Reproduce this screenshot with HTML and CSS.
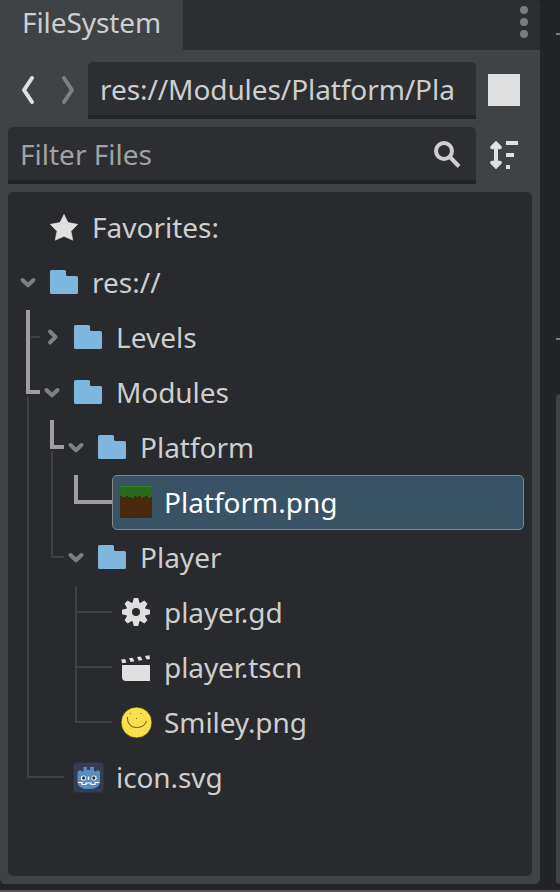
FILE: index.html
```html
<!DOCTYPE html>
<html lang="en">
<head>
<meta charset="utf-8">
<title>FileSystem</title>
<link rel="stylesheet" href="styles.css">
</head>
<body>
<svg class="defs" width="0" height="0" aria-hidden="true">
  <symbol id="folder" viewBox="0 0 32 32"><path d="M3.500 4H16.500Q18 4 18 5.500V8.500Q18 10 19.500 10H28.500Q30 10 30 11.500V26.500Q30 28 28.500 28H3.500Q2 28 2 26.500V5.500Q2 4 3.500 4Z" fill="#7fb6dd"/></symbol>
  <symbol id="down" viewBox="0 0 24 24"><path d="M6.500 10 12 15.300 17.500 10" fill="none" stroke="#7e7f81" stroke-width="4" stroke-linecap="round" stroke-linejoin="round"/></symbol>
  <symbol id="right" viewBox="0 0 24 24"><path d="M10 6.500 15.500 12 10 17.500" fill="none" stroke="#7e7f81" stroke-width="4" stroke-linecap="round" stroke-linejoin="round"/></symbol>
  <symbol id="teeth" viewBox="0 0 32 32"><path d="M13.800 2H18.200L19.800 8V24L18.200 30H13.800L12.200 24V8Z"/></symbol>
</svg>
<div class="editor">
  <section class="dock">
    <header class="tabs">
      <div class="tab">FileSystem</div>
      <svg class="dots" width="8" height="34" viewBox="0 0 8 34" fill="#7b7c7e"><circle cx="4" cy="5" r="4"/><circle cx="4" cy="17" r="4"/><circle cx="4" cy="29" r="4"/></svg>
    </header>
    <div class="bar path-bar">
      <svg class="nav" width="80" height="57" viewBox="0 0 80 57" fill="none" stroke-width="4" stroke-linecap="round" stroke-linejoin="round"><path d="M32 16 24 28 32 40" stroke="#e0e0e0"/><path d="M64 16 72 28 64 40" stroke="#7e8082"/></svg>
      <div class="field path">res://Modules/Platform/Pla</div>
      <div class="split"></div>
    </div>
    <div class="bar">
      <div class="field filter"><span>Filter Files</span>
        <svg width="32" height="32" viewBox="0 0 32 32" fill="none" stroke="#cfcfd0" stroke-width="4"><circle cx="14" cy="13" r="8"/><path d="M20 19 29 28.500"/></svg>
      </div>
      <svg class="sort" width="32" height="32" viewBox="0 0 32 32" fill="#e0e0e0"><path d="M8 7V25" stroke="#e0e0e0" stroke-width="4"/><path d="M8 2 13.500 7.500Q14 10 12 10H4Q2 10 2.500 7.500ZM8 30 13.500 24.500Q14 22 12 22H4Q2 22 2.500 24.500Z" stroke="#e0e0e0" stroke-width=".5"/><path d="M18 2H30V6H18ZM18 14H26V18H18ZM18 26H22V30H18Z"/></svg>
    </div>
    <div class="tree">
      <svg class="guides" width="524" height="684" viewBox="8 192 524 684" fill="none">
        <path d="M31 337H40M28 396V777H64M52 451V557H64M76 586V722H112M76 612H112M76 667H112" stroke="#404144" stroke-width="2"/>
        <path d="M28 310V392H40M52 420V447H64M76 475V502H112" stroke="#9f9fa1" stroke-width="4"/>
      </svg>
      <div class="row d0"><svg class="arrow"></svg><svg class="icon" viewBox="0 0 32 32"><path d="M16 3.500 20 11.500 29.700 13.300 23 20.200 24.800 29.200 16 25.300 7.200 29.200 9 20.200 2.300 13.300 12 11.500Z" fill="#e0e0e0" stroke="#e0e0e0" stroke-width=".6"/></svg><span>Favorites:</span></div>
      <div class="row d0"><svg class="arrow"><use href="#down"/></svg><svg class="icon"><use href="#folder"/></svg><span>res://</span></div>
      <div class="row d1"><svg class="arrow"><use href="#right"/></svg><svg class="icon"><use href="#folder"/></svg><span>Levels</span></div>
      <div class="row d1"><svg class="arrow"><use href="#down"/></svg><svg class="icon"><use href="#folder"/></svg><span class="tight">Modules</span></div>
      <div class="row d2"><svg class="arrow"><use href="#down"/></svg><svg class="icon"><use href="#folder"/></svg><span>Platform</span></div>
      <div class="row selected"><svg class="icon" viewBox="0 0 32 32"><path d="M0 0H32V32H0Z" fill="#49290e"/><path d="M0 0H32V11H30V12H28V10H25V11H23V12H21V10H18V11H16V10H14V12H11V11H8V10H6V11H2V10H0Z" fill="#29691c"/><path d="M0 0H32V1H0ZM4 4H5V5H4ZM10 7H11V8H10ZM18 3H19V4H18ZM28 4H29V5H28ZM24 8H25V9H24Z" fill="#328325"/><path d="M7 3H8V4H7ZM14 6H15V7H14ZM21 5H22V6H21ZM27 8H28V9H27Z" fill="#205315"/><path d="M4 17H5V18H4ZM12 15H13V16H12ZM19 20H20V21H19ZM27 16H28V17H27ZM8 26H9V27H8ZM24 28H25V29H24Z" fill="#5c351a"/></svg><span>Platform.png</span></div>
      <div class="row d2"><svg class="arrow"><use href="#down"/></svg><svg class="icon"><use href="#folder"/></svg><span>Player</span></div>
      <div class="row d4"><svg class="icon" viewBox="0 0 32 32" fill="#e0e0e0"><mask id="hub"><path d="M0 0H32V32H0Z" fill="#fff"/><circle cx="16" cy="16" r="4" fill="#000"/></mask><g mask="url(#hub)"><circle cx="16" cy="16" r="9.800"/><use href="#teeth"/><use href="#teeth" transform="rotate(45 16 16)"/><use href="#teeth" transform="rotate(90 16 16)"/><use href="#teeth" transform="rotate(135 16 16)"/></g></svg><span>player.gd</span></div>
      <div class="row d4"><svg class="icon" viewBox="0 0 32 32" fill="#e0e0e0"><path d="M2 14H30V30H6Q2 30 2 26Z"/><path d="M1.200 8.500 5 8 6.500 11.500 2.200 12.200ZM9 7.300 12.600 6.800 14.500 10.300 10.600 11ZM17 6.100 20.600 5.600 22.500 9.100 18.600 9.800ZM25 4.900 29.500 4.200 30 8 26.600 8.600Z"/></svg><span>player.tscn</span></div>
      <div class="row d4"><svg class="icon" viewBox="0 0 32 32"><circle cx="16.500" cy="16.500" r="15.500" fill="#f8df4b" stroke="#171711" stroke-width=".7"/><path d="M7.300 11Q7.500 21.500 16.500 21.500 24.500 21.500 26.500 15" fill="none" stroke="#534b18" stroke-width=".9"/><path d="M10 7.500H11M20.500 7.500H21.500M16 12.500H17" stroke="#706522"/></svg><span>Smiley.png</span></div>
      <div class="row leaf1"><svg class="icon" viewBox="0 0 32 32"><rect x="1.500" y="1.500" width="30" height="30" rx="3" fill="#363d52" stroke="#2c3143"/><path d="M5.500 11 8 9 10 10.500 11.500 10V6H15V9H18V6H22V10L24 10.500 26 9 28 11V22Q26 28 16.500 28 7 28 5.500 22V11Z" fill="#578dc1"/><circle cx="11.500" cy="17" r="2.600" fill="#fff"/><circle cx="22" cy="17" r="2.600" fill="#fff"/><circle cx="11.700" cy="17" r="1.700" fill="#34383d"/><circle cx="21.800" cy="17" r="1.700" fill="#34383d"/><path d="M16.500 15.500V19" stroke="#fff" stroke-width="1.300"/><path d="M6 21.500H10V23.500H14V22H19V23.500H23V21.500H27" fill="none" stroke="#fff" stroke-width="1.200"/></svg><span>icon.svg</span></div>
    </div>
  </section>
  <aside class="viewport">
    <div class="tick first"></div>
    <div class="tick second"></div>
    <div class="neighbor"></div>
  </aside>
</div>
<footer class="edge"></footer>
</body>
</html>
```
FILE: styles.css
```css
* { box-sizing: border-box; }
body {
  margin: 0;
  height: 892px;
  overflow: hidden;
  display: flex;
  flex-direction: column;
  background: #232428;
  color: #cdcecf;
  font: 28px/38px "Noto Sans", sans-serif;
}
svg { flex: none; display: block; }
.defs { position: absolute; }
.editor { display: flex; height: 884px; }
.dock {
  width: 540px;
  height: 884px;
  background: #404346;
  border-radius: 0 5px 5px 5px;
  overflow: hidden;
}
.tabs {
  height: 50px;
  background: #2d2e32;
  display: flex;
  justify-content: space-between;
  align-items: flex-start;
}
.tab {
  width: 183px;
  height: 50px;
  padding: 3px 0 0 22px;
  background: #404346;
  letter-spacing: -.08px;
}
.dots { margin: 5px 12px 0 0; }
.bar { display: flex; height: 57px; margin: 0 20px 8px 8px; }
.path-bar { margin-top: 12px; }
.nav { margin-left: -8px; margin-right: 8px; }
.field {
  height: 57px;
  background: #2d2e32;
  border-bottom: 4px solid #232428;
  border-radius: 5px 5px 0 0;
  white-space: nowrap;
}
.path { width: 388px; padding: 8px 12px 0; letter-spacing: -.08px; }
.split { width: 32px; height: 32px; margin: 12px 0 0 12px; background: #e0e0e0; }
.filter {
  width: 468px;
  padding: 8px 14px 0 12px;
  display: flex;
  justify-content: space-between;
  color: #a1a2a3;
}
.filter svg { margin-top: 3px; }
.sort { margin: 12px 0 0 12px; }
.tree {
  position: relative;
  height: 684px;
  margin: 0 8px;
  padding: 8px;
  border-radius: 5px;
  background: #292a2d;
}
.guides { position: absolute; left: 0; top: 0; }
.row { display: flex; height: 55px; padding-top: 11px; white-space: nowrap; }
.arrow { width: 24px; height: 24px; margin: 4px 8px 0 0; }
.icon { width: 32px; height: 32px; margin-right: 12px; }
.row span { margin-top: -3px; }
.d1 { padding-left: 24px; }
.d2 { padding-left: 48px; }
.d4 { padding-left: 104px; }
.d4 span, .leaf1 span, .tight { letter-spacing: -.08px; }
.leaf1 { padding-left: 56px; }
.selected {
  position: relative;
  margin-left: 96px;
  padding: 10px 7px 0;
  background: #395366;
  border: 1px solid #848789;
  border-radius: 5px;
  color: #fff;
}
.viewport { flex: 1; padding-top: 33px; display: flex; flex-direction: column; align-items: flex-end; }
.tick { width: 4px; height: 2px; background: #7b7c7e; }
.second { margin-top: 303px; }
.neighbor { width: 4px; height: 490px; margin-top: 54px; background: #404144; border-radius: 4px 0 0 4px; }
.edge { height: 2px; margin-top: 6px; background: #555254; border-radius: 0; }
```
